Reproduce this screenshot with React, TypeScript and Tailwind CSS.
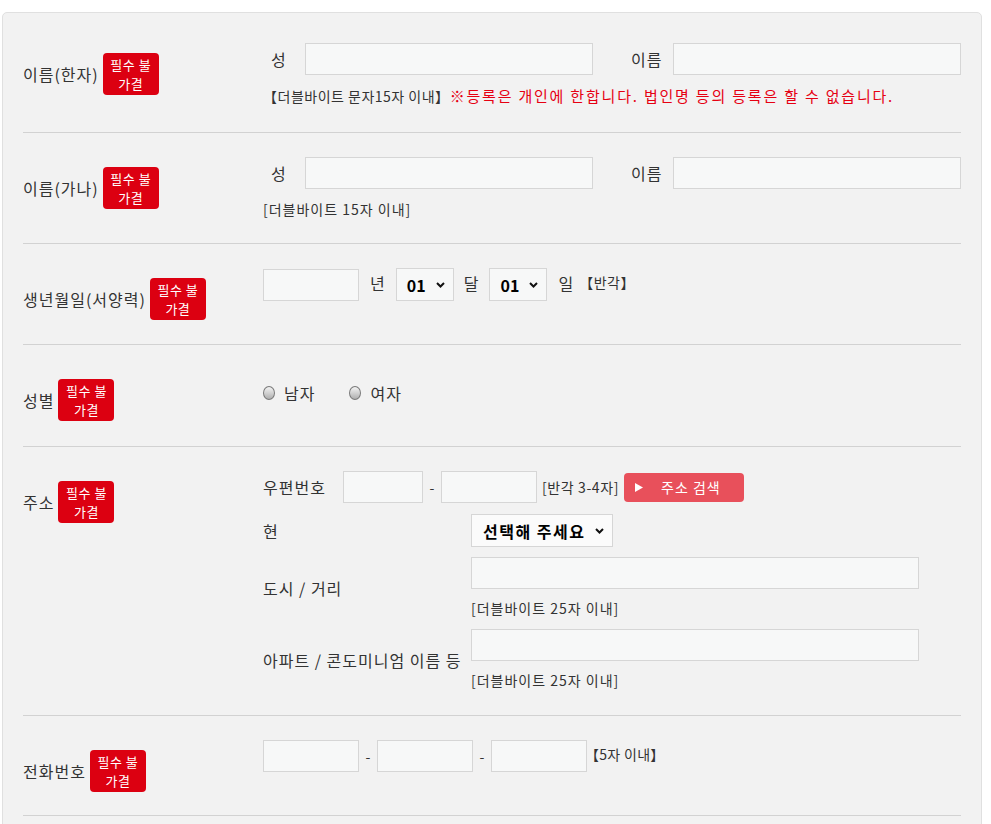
import React from "react";

const FONT = { fontFamily: '"Noto Sans CJK KR", "Noto Sans", sans-serif' };

const TXT = "text-[16px] tracking-[1px] text-[#333]";

function Badge() {
  return (
    <span className="inline-flex flex-col items-center justify-center w-[56px] h-[42px] rounded-[4px] bg-[#dc0011] text-white text-[13px] tracking-[0.5px] leading-[19px] shrink-0">
      <span>필수 불</span>
      <span>가결</span>
    </span>
  );
}

function Label({ text, pb = "pb-[24px]" }: { text: string; pb?: string }) {
  return (
    <div className={`w-[240px] shrink-0 pt-[34px] ${pb}`}>
      <div className="flex items-center gap-[4px]">
        <span className={`${TXT} whitespace-nowrap`}>{text}</span>
        <Badge />
      </div>
    </div>
  );
}

function Input({ w }: { w: string }) {
  return <div className={`${w} h-[32px] border border-[#d6d6d6] bg-[#f7f8f8] shrink-0`} />;
}

function Chevron() {
  return (
    <svg width="9" height="6" viewBox="0 0 9 6" className="shrink-0">
      <path d="M1 1 L4.5 4.5 L8 1" fill="none" stroke="#111" strokeWidth="2" />
    </svg>
  );
}

function Select({ value, cls, tcls = "" }: { value: string; cls: string; tcls?: string }) {
  return (
    <div className={`${cls} h-[33px] border border-[#d6d6d6] flex items-center justify-between shrink-0`}>
      <span className={`font-bold text-[16px] text-black whitespace-nowrap ${tcls}`}>{value}</span>
      <Chevron />
    </div>
  );
}

function Radio({ label }: { label: string }) {
  return (
    <div className="flex items-center">
      <span className="inline-block w-[12px] h-[14px] rounded-[50%] border border-[#7a7a7a] bg-gradient-to-b from-[#f4f4f4] to-[#b0b0b0]" />
      <span className={`ml-[9px] ${TXT}`}>{label}</span>
    </div>
  );
}

function Note({ children, cls = "" }: { children: React.ReactNode; cls?: string }) {
  return <div className={`h-[20px] text-[14px] tracking-[1px] leading-[20px] text-[#333] whitespace-nowrap ${cls}`}>{children}</div>;
}

export default function App() {
  return (
    <div className="min-h-screen bg-white pt-[12px] pl-[2px]" style={FONT}>
      <div className="w-[980px] border border-[#e0e0e0] rounded-[5px] bg-[#f2f2f2] px-[20px] pt-[6px] pb-[40px]">
        {/* 이름(한자) */}
        <div className="flex border-b border-[#d2d2d2]">
          <Label text="이름(한자)" />
          <div className="flex-1 pt-[24px] pb-[27px]">
            <div className="flex items-center">
              <span className={`w-[42px] pl-[8px] ${TXT}`}>성</span>
              <Input w="w-[288px]" />
              <span className={`ml-[38px] w-[42px] ${TXT}`}>이름</span>
              <Input w="w-[288px]" />
            </div>
            <div className="mt-[10px] h-[20px] leading-[20px] whitespace-nowrap">
              <span className="text-[14px] tracking-[0.5px] text-[#333]">【더블바이트 문자15자 이내】</span>
              <span className="text-[#e60012] text-[15px] tracking-[1.8px]">※등록은 개인에 한합니다. 법인명 등의 등록은 할 수 없습니다.</span>
            </div>
          </div>
        </div>

        {/* 이름(가나) */}
        <div className="flex border-b border-[#d2d2d2]">
          <Label text="이름(가나)" />
          <div className="flex-1 pt-[24px] pb-[24px]">
            <div className="flex items-center">
              <span className={`w-[42px] pl-[8px] ${TXT}`}>성</span>
              <Input w="w-[288px]" />
              <span className={`ml-[38px] w-[42px] ${TXT}`}>이름</span>
              <Input w="w-[288px]" />
            </div>
            <Note cls="mt-[10px]">[더블바이트 15자 이내]</Note>
          </div>
        </div>

        {/* 생년월일 */}
        <div className="flex border-b border-[#d2d2d2]">
          <Label text="생년월일(서양력)" />
          <div className="flex-1 pt-[24px] pb-[24px]">
            <div className="flex items-center h-[33px]">
              <Input w="w-[96px]" />
              <span className={`ml-[11px] ${TXT} self-start mt-[3px]`}>년</span>
              <Select value="01" cls="ml-[10px] w-[58px] bg-[#f7f8f8] pl-[10px] pr-[8px]" />
              <span className={`ml-[10px] ${TXT} self-start mt-[3px]`}>달</span>
              <Select value="01" cls="ml-[10px] w-[58px] bg-[#f7f8f8] pl-[10px] pr-[8px]" />
              <span className={`ml-[11px] ${TXT} self-start mt-[3px]`}>일</span>
              <span className="ml-[5px] text-[14px] tracking-[0.5px] text-[#333] self-start mt-[4px]">【반각】</span>
            </div>
          </div>
        </div>

        {/* 성별 */}
        <div className="flex border-b border-[#d2d2d2]">
          <Label text="성별" pb="pb-[25px]" />
          <div className="flex-1 pt-[38px] pb-[24px]">
            <div className="flex items-center h-[20px]">
              <Radio label="남자" />
              <div className="ml-[34px]">
                <Radio label="여자" />
              </div>
            </div>
          </div>
        </div>

        {/* 주소 */}
        <div className="flex border-b border-[#d2d2d2]">
          <Label text="주소" />
          <div className="flex-1 pt-[24px] pb-[25px]">
            <div className="flex items-center h-[32px]">
              <span className={`w-[80px] ${TXT}`}>우편번호</span>
              <Input w="w-[80px]" />
              <span className="w-[18px] text-center text-[14px] text-[#333]">-</span>
              <Input w="w-[96px]" />
              <span className="ml-[5px] text-[14px] tracking-[0.6px] text-[#333] whitespace-nowrap">[반각 3-4자]</span>
              <button className="ml-[5px] w-[120px] h-[29px] rounded-[4px] bg-[#e8505b] flex items-center text-white text-[14px] tracking-[1px] pl-[11px]">
                <svg width="8" height="9" viewBox="0 0 8 9" className="shrink-0">
                  <path d="M0 0 L8 4.5 L0 9 Z" fill="#fff" />
                </svg>
                <span className="ml-[18px]">주소 검색</span>
              </button>
            </div>

            <div className="mt-[11px] flex items-center">
              <span className={`w-[208px] ${TXT}`}>현</span>
              <Select value="선택해 주세요" cls="w-[142px] bg-[#fbfbfb] pl-[11px] pr-[8px]" tcls="tracking-[1.5px]" />
            </div>

            <div className="mt-[10px] flex items-center">
              <span className={`w-[208px] ${TXT} whitespace-nowrap`}>도시 / 거리</span>
              <div>
                <Input w="w-[448px]" />
                <Note cls="mt-[9px]">[더블바이트 25자 이내]</Note>
              </div>
            </div>

            <div className="mt-[11px] flex items-center">
              <span className={`w-[208px] ${TXT} whitespace-nowrap`}>아파트 / 콘도미니엄 이름 등</span>
              <div>
                <Input w="w-[448px]" />
                <Note cls="mt-[9px]">[더블바이트 25자 이내]</Note>
              </div>
            </div>
          </div>
        </div>

        {/* 전화번호 */}
        <div className="flex border-b border-[#d2d2d2]">
          <Label text="전화번호" pb="pb-[23px]" />
          <div className="flex-1 pt-[24px] pb-[23px]">
            <div className="flex items-center h-[32px]">
              <Input w="w-[96px]" />
              <span className="w-[18px] text-center text-[14px] text-[#333]">-</span>
              <Input w="w-[96px]" />
              <span className="w-[18px] text-center text-[14px] text-[#333]">-</span>
              <Input w="w-[96px]" />
              <span className="ml-[-2px] text-[14px] tracking-[0.3px] text-[#333] self-start mt-[4px] whitespace-nowrap">【5자 이내】</span>
            </div>
          </div>
        </div>

        <div className="h-[80px]" />
      </div>
    </div>
  );
}
